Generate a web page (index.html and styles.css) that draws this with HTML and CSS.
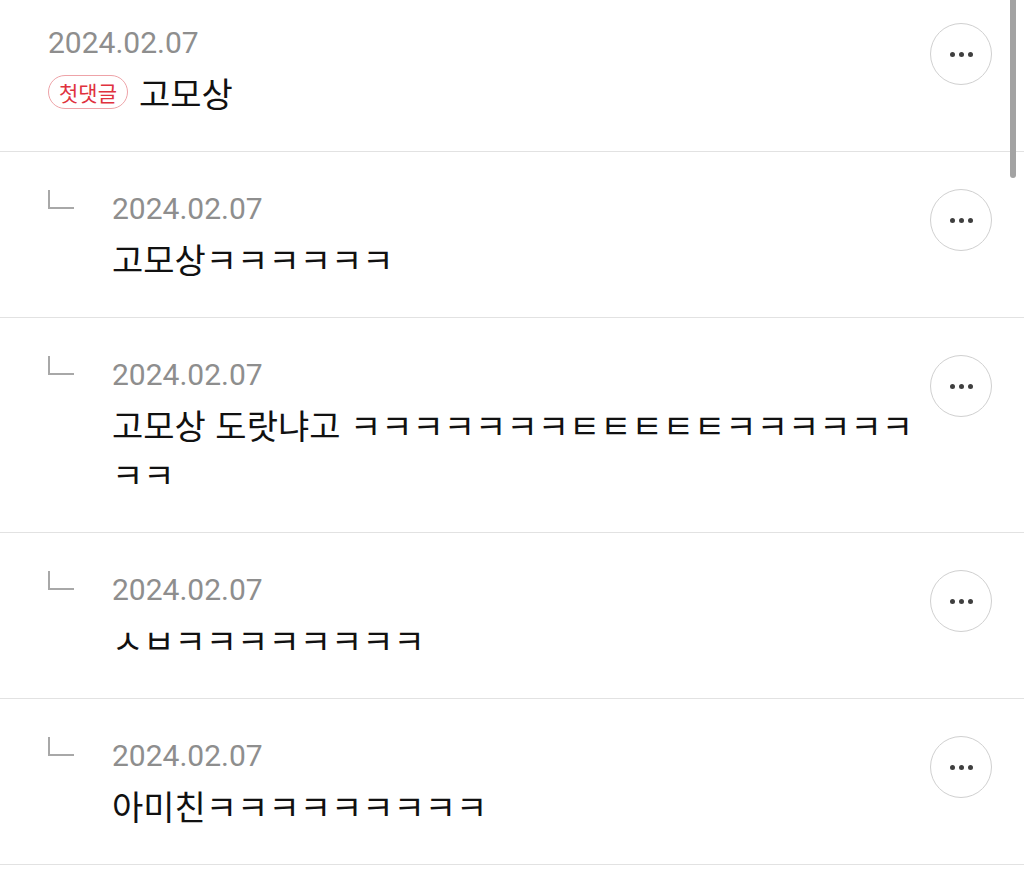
FILE: index.html
```html
<!DOCTYPE html>
<html lang="ko">
<head>
    <meta charset="UTF-8">
    <meta name="viewport" content="width=device-width, initial-scale=1.0">
    <title>댓글</title>
    <link rel="stylesheet" href="styles.css">
</head>
<body>
    <div class="comment-list">

        <!-- 첫 댓글 -->
        <div class="comment">
            <div class="comment-body">
                <div class="date">2024.02.07</div>
                <div class="text">
                    <span class="badge">첫댓글</span>고모상
                </div>
            </div>
            <button class="more" aria-label="더보기"><span></span><span></span><span></span></button>
        </div>

        <!-- 답글 -->
        <div class="comment reply">
            <div class="reply-mark"></div>
            <div class="comment-body">
                <div class="date">2024.02.07</div>
                <div class="text">고모상ㅋㅋㅋㅋㅋㅋ</div>
            </div>
            <button class="more" aria-label="더보기"><span></span><span></span><span></span></button>
        </div>

        <div class="comment reply">
            <div class="reply-mark"></div>
            <div class="comment-body">
                <div class="date">2024.02.07</div>
                <div class="text">고모상 도랏냐고 ㅋㅋㅋㅋㅋㅋㅋㅌㅌㅌㅌㅌㅋㅋㅋㅋㅋㅋㅋㅋ</div>
            </div>
            <button class="more" aria-label="더보기"><span></span><span></span><span></span></button>
        </div>

        <div class="comment reply">
            <div class="reply-mark"></div>
            <div class="comment-body">
                <div class="date">2024.02.07</div>
                <div class="text">ㅅㅂㅋㅋㅋㅋㅋㅋㅋㅋ</div>
            </div>
            <button class="more" aria-label="더보기"><span></span><span></span><span></span></button>
        </div>

        <div class="comment reply">
            <div class="reply-mark"></div>
            <div class="comment-body">
                <div class="date">2024.02.07</div>
                <div class="text">아미친ㅋㅋㅋㅋㅋㅋㅋㅋㅋ</div>
            </div>
            <button class="more" aria-label="더보기"><span></span><span></span><span></span></button>
        </div>

    </div>

    <div class="scrollbar"></div>
</body>
</html>
```

FILE: styles.css
```css
body {
    margin: 0;
    background-color: #ffffff;
    color: #111111;
    font-family: "Noto Sans CJK KR", "Noto Sans", sans-serif;
    overflow: hidden;
}

/* 목록이 위로 살짝 스크롤된 상태 */
.comment-list {
    margin-top: -14px;
}

.comment {
    display: flex;
    align-items: flex-start;
    padding: 36px 32px 34px 48px;
    border-bottom: 1px solid #e2e2e2;
}

.comment-body {
    flex: 1;
    min-width: 0;
}

.date {
    font-family: Roboto, "Noto Sans CJK KR", sans-serif;
    font-size: 30px;
    line-height: 42px;
    color: #8e8e8e;
}

.text {
    margin-top: 4px;
    font-size: 34px;
    line-height: 49px;
    color: #111111;
    word-break: break-all;
    padding-right: 4px;
}

/* 첫댓글 뱃지 */
.badge {
    display: inline-block;
    vertical-align: 6px;
    height: 32px;
    line-height: 32px;
    padding: 0 10px;
    margin-right: 11px;
    border: 1px solid #eea3a8;
    border-radius: 17px;
    font-size: 21px;
    color: #e0323e;
}

/* 답글 표시 */
.reply-mark {
    width: 24px;
    height: 17px;
    margin-top: 2px;
    margin-right: 38px;
    border-left: 2px solid #a8a8a8;
    border-bottom: 2px solid #a8a8a8;
    flex-shrink: 0;
}

.more {
    flex-shrink: 0;
    display: flex;
    align-items: center;
    justify-content: center;
    gap: 4px;
    width: 62px;
    height: 62px;
    margin-top: 1px;
    padding: 0;
    border: 1.5px solid #d0d0d0;
    border-radius: 50%;
    background: #ffffff;
}

.more span {
    width: 5px;
    height: 5px;
    border-radius: 50%;
    background-color: #3f3f3f;
}

.scrollbar {
    position: fixed;
    top: -6px;
    right: 8px;
    width: 6px;
    height: 184px;
    border-radius: 3px;
    background-color: #a3a3a3;
}
```
